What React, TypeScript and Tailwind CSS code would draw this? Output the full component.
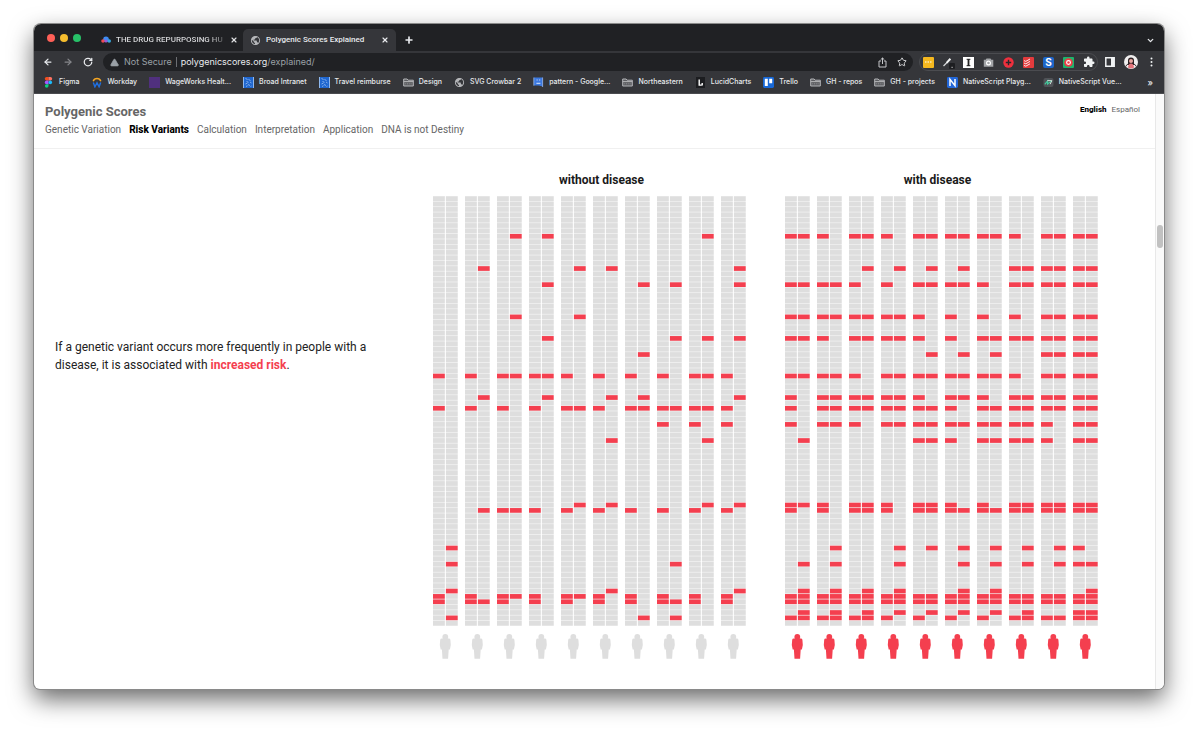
import type { ReactElement, ReactNode } from "react";
import { ArrowLeft, ArrowRight, ChevronDown, Plus, RotateCw, Star, TriangleAlert, X } from "lucide-react";
import { MdExtension, MdPublic } from "react-icons/md";

const ROW_COUNT = 80;
const ROW_PITCH = 5.375;
const PERSON_PITCH = 32;

// One character per person: L = left copy, R = right copy, B = both copies.
type Variants = Record<number, string>;

const WITHOUT_DISEASE: Variants = {
  7: "..RR....R.",
  13: ".R..RR...R",
  16: "...R..RR.R",
  22: "..R.R.....",
  26: "...R...RRR",
  29: "......R...",
  33: "LLBBLLLLBL",
  37: ".R.R.RR..R",
  39: "LLLLBLBBBL",
  42: ".......LLL",
  45: ".....R..R.",
  57: "....RR..RR",
  58: ".RBLLLLLLL",
  65: "R.........",
  68: "R......R..",
  73: "R....R...R",
  74: "LLBLBLLLLL",
  75: "LBLLLLLBLL",
  78: "R.....RR..",
};

const WITH_DISEASE: Variants = {
  7: "BLBLBBBLBB",
  13: "..RRRR.BBB",
  16: "BBLLBBLBBB",
  22: "BBBBLLLLBB",
  26: "BLBBLLBBBB",
  29: "....RRR.BB",
  33: "BBLBBBBLBB",
  37: "LBBBLBLBBB",
  39: "LBBBBLBBBB",
  42: "LBLBBBBBLB",
  45: "R...BLBBLB",
  57: "BLBLBLLBBB",
  58: "LLBLBBBBBB",
  65: ".R.RRRRRRL",
  68: "RR.R.RRRRB",
  73: "RRRR.RR..R",
  74: "BBBBBBBBBB",
  75: "BBBBBBBBBB",
  77: "RRRRRRRR.B",
  78: "BBBLLLLBBB",
};

const SECTIONS = ["Genetic Variation", "Risk Variants", "Calculation", "Interpretation", "Application", "DNA is not Destiny"];

function GenomeChart({ label, variants, personColor }: { label: string; variants: Variants; personColor: string }): ReactElement {
  const people = Array.from({ length: 10 }, (_, i) => i);
  const rows = Array.from({ length: ROW_COUNT }, (_, i) => i);

  return (
    <svg role="img" aria-label={label} width="313" height="463" viewBox="0 0 313 463">
      {people.map((p) => (
        <g key={p} transform={`translate(${p * PERSON_PITCH} 0)`}>
          <rect x="0" y="0" width="11.8" height="430" fill="#f4f4f4" />
          <rect x="12.9" y="0" width="11.8" height="430" fill="#f4f4f4" />
          {rows.map((r) => {
            const mark = variants[r]?.[p] ?? ".";
            return (["L", "R"] as const).map((side) => (
              <rect
                key={`${r}${side}`}
                x={side === "L" ? 0 : 12.9}
                y={r * ROW_PITCH + 0.3}
                width="11.8"
                height="4.7"
                fill={mark === side || mark === "B" ? "#f43f4f" : "#dedede"}
              />
            ));
          })}
          <g transform="translate(7 438)" fill={personColor}>
            <circle cx="5.3" cy="2.9" r="2.9" />
            <path d="M1.8 4.5h7q1.4 0 1.6 1.3l.4 5.2-.9 4.4H8.7L8.1 24.8H2.5L1.9 15.4H.7L-.2 11l.4-5.2q.2-1.3 1.6-1.3z" />
          </g>
        </g>
      ))}
    </svg>
  );
}

function FolderIcon(): ReactElement {
  return (
    <svg width="11" height="11" viewBox="0 0 11 11" fill="none" stroke="#b4b5b8" strokeWidth="1">
      <path fill="#5d5e62" d="M.7 9V2h3.4l1 1.2h5.2V9z" />
      <path d="M.7 4.6h9.6" />
      <path d="M2.2 6.8h6.6" strokeDasharray="1 .8" stroke="#8c8d90" />
    </svg>
  );
}

function BroadIcon(): ReactElement {
  return (
    <svg width="11" height="11" viewBox="0 0 11 11">
      <path fill="#1f66cf" d="M0 0h11v11H0z" />
      <path d="M.5 0v11M10.5 0v11" stroke="#8fb8ee" />
      <path d="M2.5 1.5l2 1M5.5 2.5l2 1M3.5 4.5l2 .8M7 5l1.5 1M2.5 7l2-1M5 7.5l2 1M3 9.5l1.5-.8M7.5 9.5l1-.5" stroke="#8fb8ee" strokeWidth=".9" fill="none" />
    </svg>
  );
}

const GLOBE = <MdPublic size={11} color="#b4b5b8" />;

const BOOKMARKS: { name: string; icon: ReactNode }[] = [
  {
    name: "Figma",
    icon: (
      <svg width="9" height="11" viewBox="0 0 9 11">
        <path fill="#f24e1e" d="M4.5 0H2.6a1.8 1.8 0 000 3.6h1.9z" />
        <path fill="#ff7262" d="M4.5 0h1.9a1.8 1.8 0 010 3.6H4.5z" />
        <path fill="#a259ff" d="M4.5 3.6H2.6a1.8 1.8 0 000 3.6h1.9z" />
        <circle cx="6.3" cy="5.4" r="1.8" fill="#1abcfe" />
        <path fill="#0acf83" d="M4.5 7.2H2.6a1.8 1.8 0 101.9 1.9z" />
      </svg>
    ),
  },
  {
    name: "Workday",
    icon: (
      <svg width="10" height="11" viewBox="0 0 10 11" fill="none">
        <path d="M1.2 4.2a4 4 0 017.6 0" stroke="#f5a623" strokeWidth="1.4" />
        <path d="M1.3 5.4l1.6 4.4L5 5.8l2.1 4 1.6-4.4" stroke="#1f6fe0" strokeWidth="1.4" />
      </svg>
    ),
  },
  { name: "WageWorks Healt...", icon: <span className="block size-[11px] bg-[#50307e]" /> },
  { name: "Broad Intranet", icon: <BroadIcon /> },
  { name: "Travel reimburse", icon: <BroadIcon /> },
  { name: "Design", icon: <FolderIcon /> },
  { name: "SVG Crowbar 2", icon: GLOBE },
  {
    name: "pattern - Google...",
    icon: (
      <svg width="11" height="11" viewBox="0 0 11 11">
        <path fill="#3b78e0" d="M1 .5h8.5v9L6 8.5H1z" />
        <path d="M.8.5v8.2M9.6.5v9.5" stroke="#9dbdf2" strokeWidth=".8" />
        <path d="M3.6 3h1M6.2 3h1M3.4 6.3h4" stroke="#dbe7fb" />
      </svg>
    ),
  },
  { name: "Northeastern", icon: <FolderIcon /> },
  {
    name: "LucidCharts",
    icon: (
      <svg width="11" height="11" viewBox="0 0 11 11">
        <path fill="#1c1d20" d="M1 0h9v11H1z" />
        <path d="M4.2 2.5v5.6h2.4M7.2 6v2.6" stroke="#fff" strokeWidth="1.4" fill="none" />
      </svg>
    ),
  },
  {
    name: "Trello",
    icon: (
      <svg width="11" height="11" viewBox="0 0 11 11">
        <rect width="11" height="11" rx="1.4" fill="#1868d6" />
        <path fill="#fff" d="M1.8 1.8h3v7.2h-3zM6.2 1.8h3v4.4h-3z" />
      </svg>
    ),
  },
  { name: "GH - repos", icon: <FolderIcon /> },
  { name: "GH - projects", icon: <FolderIcon /> },
  {
    name: "NativeScript Playg...",
    icon: (
      <svg width="11" height="11" viewBox="0 0 11 11">
        <rect width="11" height="11" rx="1.4" fill="#2367d8" />
        <path d="M3 9V2.4L8 8.6V2" stroke="#fff" strokeWidth="1.5" fill="none" />
      </svg>
    ),
  },
  {
    name: "NativeScript Vue...",
    icon: (
      <svg width="11" height="11" viewBox="0 0 11 11" fill="none">
        <rect x=".5" y="1" width="10" height="9" rx="2" fill="#505257" />
        <path d="M1.8 7.4L4.6 4v3L9 3.6" stroke="#42c79a" strokeWidth="1.2" />
        <path d="M4.4 3.6h4.4l-1.6 3.6" stroke="#dfe6e3" strokeWidth=".9" />
      </svg>
    ),
  },
];

const EXTENSIONS: { name: string; icon: ReactNode }[] = [
  {
    name: "Notes",
    icon: (
      <svg width="11" height="11" viewBox="0 0 11 11">
        <rect width="11" height="11" rx="1" fill="#f5b81f" />
        <path d="M2 5h7" stroke="#fff" strokeWidth="1.2" strokeDasharray="1.5 1" />
      </svg>
    ),
  },
  {
    name: "Color picker",
    icon: (
      <svg className="shrink-0" width="13" height="13" viewBox="0 0 13 13">
        <path d="M1.5 10L5 6.5" stroke="#d5d6d8" strokeWidth="1.2" />
        <path d="M4.6 6.9L8.4 2.8" stroke="#f1f3f4" strokeWidth="2" />
        <rect x="7" y="7" width="6" height="6" rx="1" fill="#1d1e21" />
        <path d="M9.5 11.3h1.2" stroke="#d5d6d8" />
      </svg>
    ),
  },
  {
    name: "Instapaper",
    icon: (
      <svg width="11" height="11" viewBox="0 0 11 11">
        <path fill="#fff" d="M0 0h11v11H0z" />
        <path d="M3.6 2.3h3.8M3.6 8.7h3.8" stroke="#222" />
        <path d="M5.5 2v7" stroke="#222" strokeWidth="1.8" />
      </svg>
    ),
  },
  {
    name: "Screenshot",
    icon: (
      <svg width="11" height="11" viewBox="0 0 11 11">
        <path fill="#a3a5a8" d="M3.5 1.5h4l.8 1.3h2v7H.8v-7h1.9z" />
        <circle cx="5.5" cy="6" r="1.9" fill="none" stroke="#fff" strokeWidth="1.2" />
      </svg>
    ),
  },
  {
    name: "Add",
    icon: (
      <svg width="11" height="11" viewBox="0 0 11 11">
        <circle cx="5.5" cy="5.5" r="5.2" fill="#f0303e" />
        <path d="M5.5 2.8v5.4M2.8 5.5h5.4" stroke="#27282b" strokeWidth="1.4" />
      </svg>
    ),
  },
  {
    name: "Todoist",
    icon: (
      <svg width="11" height="11" viewBox="0 0 11 11">
        <rect width="11" height="11" rx="1" fill="#e33b3d" />
        <path d="M1 3.6l1.8.8L7 2M1 6l1.8.8L7 4.4M1 8.4l1.8.8L7 6.8" stroke="#fff" strokeWidth=".9" fill="none" />
      </svg>
    ),
  },
  {
    name: "Stylus",
    icon: <span className="flex size-[11px] items-center justify-center rounded-xs bg-[#1d66c9] text-[10px] leading-none font-bold text-white">S</span>,
  },
  {
    name: "Recorder",
    icon: (
      <svg width="11" height="11" viewBox="0 0 11 11">
        <rect width="11" height="11" rx="1" fill="#1db46c" />
        <circle cx="5.5" cy="5.5" r="4.3" fill="#ef3c46" />
        <circle cx="5.5" cy="5.5" r="1.9" fill="none" stroke="#fff" strokeWidth="1.1" />
      </svg>
    ),
  },
  { name: "Extensions", icon: <MdExtension className="shrink-0" size={12} color="#f1f3f4" /> },
];

function TabStrip(): ReactElement {
  return (
    <div className="flex h-[27px] items-end bg-[#202124] pr-[9px] pl-[13px]">
      <div className="mb-[9px] flex gap-[5px]">
        <button aria-label="Close window" className="size-2 rounded-full bg-[#fe5f57]" />
        <button aria-label="Minimize" className="size-2 rounded-full bg-[#f5bd2e]" />
        <button aria-label="Zoom" className="size-2 rounded-full bg-[#27c168]" />
      </div>
      <div className="ml-5 flex h-[22px] w-[142px] items-center gap-[5px]">
        <svg className="shrink-0" width="10" height="8" viewBox="0 0 10 8">
          <circle cx="5" cy="3.2" r="2.8" fill="#3f8cf3" />
          <circle cx="2" cy="5" r="1.8" fill="#ef4a55" />
          <circle cx="8.2" cy="5" r="1.8" fill="#38a8e0" />
          <circle cx="5" cy="5" r="1.5" fill="#9a5bd6" />
        </svg>
        <span className="flex-1 bg-linear-to-r from-[#dfe0e2] from-85% to-[#dfe0e2]/20 bg-clip-text font-['Roboto',sans-serif] text-[8px] font-medium whitespace-nowrap text-transparent">
          THE DRUG REPURPOSING HU
        </span>
        <button aria-label="Close tab" className="mr-[5px]">
          <X size={8} strokeWidth={3.5} color="#dfe0e2" />
        </button>
      </div>
      <div className="flex h-[22px] w-[153px] items-center gap-[5px] rounded-t-[5px] bg-[#35363a] px-[7px] text-[#e8eaed]">
        <MdPublic size={11} color="#b4b5b8" />
        <span className="flex-1 font-['Roboto',sans-serif] text-[8px] font-medium whitespace-nowrap">Polygenic Scores Explained</span>
        <button aria-label="Close tab">
          <X size={8} strokeWidth={3.5} />
        </button>
      </div>
      <button aria-label="New tab" className="mb-[6px] ml-2">
        <Plus size={10} strokeWidth={4} color="#e8eaed" />
      </button>
      <button aria-label="Search tabs" className="mb-[6px] ml-auto">
        <ChevronDown size={9} strokeWidth={3.5} color="#e8eaed" />
      </button>
    </div>
  );
}

function Toolbar(): ReactElement {
  return (
    <div className="flex h-[22px] items-center bg-[#35363a] pr-2 pl-[9px] text-[#e8eaed]">
      <div className="flex items-center gap-[10px]">
        <button aria-label="Back"><ArrowLeft size={10} strokeWidth={3} /></button>
        <button aria-label="Forward"><ArrowRight size={10} strokeWidth={3} color="#85868a" /></button>
        <button aria-label="Reload"><RotateCw size={10} strokeWidth={3} /></button>
      </div>
      <div className="ml-[10px] flex h-[18px] min-w-0 flex-1 items-center rounded-full bg-[#202124] pr-[6px] pl-[7px] text-[9px]">
        <TriangleAlert size={9} fill="#9aa0a6" color="#9aa0a6" />
        <span className="ml-[5px] whitespace-nowrap text-[#9aa0a6]">Not Secure</span>
        <span className="mx-1 h-[10px] w-px bg-[#6c6e72]" />
        <span className="flex-1 whitespace-nowrap text-[#9aa0a6]">
          <span className="text-[#e8eaed]">polygenicscores.org</span>/explained/
        </span>
        <button aria-label="Share" className="mr-[10px]">
          <svg width="9" height="11" viewBox="0 0 9 11" fill="none" stroke="#c4c6c9">
            <path d="M3 4H1v6h7V4H6M4.5 7V1M2.7 2.7L4.5 1l1.8 1.7" />
          </svg>
        </button>
        <button aria-label="Bookmark this page"><Star size={10} strokeWidth={2.2} color="#dfe0e2" /></button>
      </div>
      <div className="ml-[6px] flex h-[18px] items-center gap-[9px] rounded-full border border-[#4b4c50] px-[3px]">
        {EXTENSIONS.map((ext) => (
          <button key={ext.name} aria-label={ext.name} className="flex w-[11px] justify-center">
            {ext.icon}
          </button>
        ))}
      </div>
      <button aria-label="Side panel" className="ml-[7px]">
        <svg width="10" height="10" viewBox="0 0 10 10">
          <path d="M.8.8h8.4v8.4H.8z" fill="none" stroke="#f1f3f4" strokeWidth="1.5" />
          <path fill="#f1f3f4" d="M6 1h3v8H6z" />
        </svg>
      </button>
      <button aria-label="Profile" className="ml-[9px]">
        <svg width="14" height="14" viewBox="0 0 14 14">
          <circle cx="7" cy="7" r="7" fill="#f0eeee" />
          <path d="M4 10V5.5a3 3 0 016 0V10z" fill="#2c2224" />
          <circle cx="7" cy="6" r="2" fill="#e9a6a0" />
          <path d="M4 12.6q.3-4 3-4t3 4q-3 2-6 0z" fill="#e4747b" />
          <path d="M1.7 11.6q1-2.4 2.6-2.6M12.3 11.6q-1-2.4-2.6-2.6" stroke="#3b3032" fill="none" />
        </svg>
      </button>
      <button aria-label="Menu" className="mr-[3px] ml-[12px]">
        <svg width="3" height="10" viewBox="0 0 3 10" fill="#f1f3f4">
          <circle cx="1.5" cy="1.5" r="1" />
          <circle cx="1.5" cy="5" r="1" />
          <circle cx="1.5" cy="8.5" r="1" />
        </svg>
      </button>
    </div>
  );
}

function BookmarksBar(): ReactElement {
  return (
    <nav aria-label="Bookmarks" className="flex h-[21px] items-center gap-3 border-b border-[#4a4b4f] bg-[#35363a] pr-[11px] pb-px pl-[9px] text-[7px] font-medium text-[#e8eaed]">
      {BOOKMARKS.map((bookmark) => (
        <a key={bookmark.name} href="#" className="flex items-center gap-[5px] whitespace-nowrap">
          <span className="flex w-[11px] shrink-0 justify-center">{bookmark.icon}</span>
          {bookmark.name}
        </a>
      ))}
      <button aria-label="More bookmarks" className="ml-auto text-[9px] leading-none">»</button>
    </nav>
  );
}

function PageHeader(): ReactElement {
  return (
    <header className="flex justify-between border-b border-[#f0f0f0] pt-[9px] pr-[15px] pb-[10px] pl-[11px] text-[#666]">
      <div>
        <h1 className="text-[13px] leading-[18px] font-bold">Polygenic Scores</h1>
        <nav className="flex gap-2 text-[10px] leading-[17px]">
          {SECTIONS.map((section) => (
            <a key={section} href="#" className={section === "Risk Variants" ? "font-extrabold text-black" : ""}>
              {section}
            </a>
          ))}
        </nav>
      </div>
      <div className="flex gap-[5px] text-[8px] leading-[14px]">
        <a href="#" className="font-extrabold text-black">English</a>
        <a href="#">Español</a>
      </div>
    </header>
  );
}

export default function App(): ReactElement {
  return (
    <div className="flex min-h-screen flex-col bg-white pt-6 pr-[36px] pb-[47px] pl-[34px] font-['Inter','Liberation_Sans',sans-serif]">
      <div className="flex flex-1 flex-col overflow-hidden rounded-t-[7px] rounded-b-[6px] bg-white shadow-[0_0_0_1px_#8a8a8a,0_10px_24px_rgba(0,0,0,0.6)]">
        <TabStrip />
        <Toolbar />
        <BookmarksBar />
        <div className="flex flex-1 font-['Roboto',sans-serif]">
          <div className="min-w-0 flex-1">
            <PageHeader />
            <main className="flex pr-[57px] pl-[21px]">
              <p className="flex-1 pt-[189px] text-[12px] leading-[18px] text-[#222]">
                If a genetic variant occurs more frequently in people with a
                <br />
                disease, it is associated with <strong className="font-bold text-[#f43f4f]">increased risk</strong>.
              </p>
              <div className="flex shrink-0 gap-[39px] pt-[22px] text-center text-[12px] leading-[18px] font-bold text-[#1a1a1a]">
                <section>
                  <h2 className="mb-[7px] pl-6">without disease</h2>
                  <GenomeChart label="Variants in people without disease" variants={WITHOUT_DISEASE} personColor="#dedede" />
                </section>
                <section>
                  <h2 className="mb-[7px] pr-2">with disease</h2>
                  <GenomeChart label="Variants in people with disease" variants={WITH_DISEASE} personColor="#f43f4f" />
                </section>
              </div>
            </main>
          </div>
          <div className="w-[9px] border-l border-[#e8e8e8] bg-[#fafafa] px-px pt-[131px]">
            <div className="h-[23px] rounded-full bg-[#c1c1c1]" />
          </div>
        </div>
      </div>
    </div>
  );
}
